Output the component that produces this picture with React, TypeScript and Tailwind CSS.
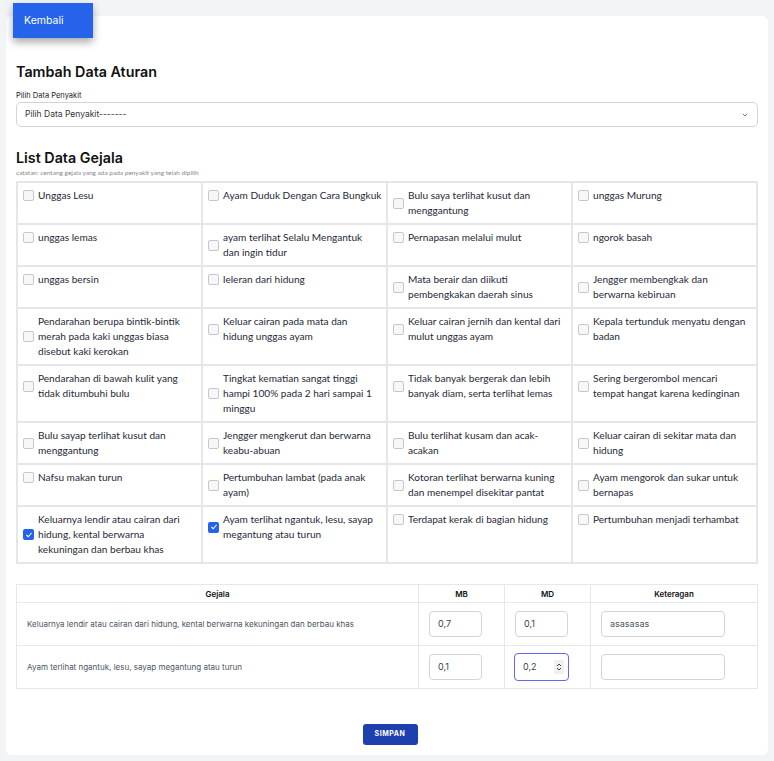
import React, {useState} from 'react';

interface Gejala {
    id: number;
    nama: string;
}

// line breaks follow the original page's wrapping
const gejalaList: Gejala[] = [
    {id: 1, nama: 'Unggas Lesu'},
    {id: 2, nama: 'Ayam Duduk Dengan Cara Bungkuk'},
    {id: 3, nama: 'Bulu saya terlihat kusut dan\nmenggantung'},
    {id: 4, nama: 'unggas Murung'},
    {id: 5, nama: 'unggas lemas'},
    {id: 6, nama: 'ayam terlihat Selalu Mengantuk\ndan ingin tidur'},
    {id: 7, nama: 'Pernapasan melalui mulut'},
    {id: 8, nama: 'ngorok basah'},
    {id: 9, nama: 'unggas bersin'},
    {id: 10, nama: 'leleran dari hidung'},
    {id: 11, nama: 'Mata berair dan diikuti\npembengkakan daerah sinus'},
    {id: 12, nama: 'Jengger membengkak dan\nberwarna kebiruan'},
    {id: 13, nama: 'Pendarahan berupa bintik-bintik\nmerah pada kaki unggas biasa\ndisebut kaki kerokan'},
    {id: 14, nama: 'Keluar cairan pada mata dan\nhidung unggas ayam'},
    {id: 15, nama: 'Keluar cairan jernih dan kental dari\nmulut unggas ayam'},
    {id: 16, nama: 'Kepala tertunduk menyatu dengan\nbadan'},
    {id: 17, nama: 'Pendarahan di bawah kulit yang\ntidak ditumbuhi bulu'},
    {id: 18, nama: 'Tingkat kematian sangat tinggi\nhampi 100% pada 2 hari sampai 1\nminggu'},
    {id: 19, nama: 'Tidak banyak bergerak dan lebih\nbanyak diam, serta terlihat lemas'},
    {id: 20, nama: 'Sering bergerombol mencari\ntempat hangat karena kedinginan'},
    {id: 21, nama: 'Bulu sayap terlihat kusut dan\nmenggantung'},
    {id: 22, nama: 'Jengger mengkerut dan berwarna\nkeabu-abuan'},
    {id: 23, nama: 'Bulu terlihat kusam dan acak-\nacakan'},
    {id: 24, nama: 'Keluar cairan di sekitar mata dan\nhidung'},
    {id: 25, nama: 'Nafsu makan turun'},
    {id: 26, nama: 'Pertumbuhan lambat (pada anak\nayam)'},
    {id: 27, nama: 'Kotoran terlihat berwarna kuning\ndan menempel disekitar pantat'},
    {id: 28, nama: 'Ayam mengorok dan sukar untuk\nbernapas'},
    {id: 29, nama: 'Keluarnya lendir atau cairan dari\nhidung, kental berwarna\nkekuningan dan berbau khas'},
    {id: 30, nama: 'Ayam terlihat ngantuk, lesu, sayap\nmegantung atau turun'},
    {id: 31, nama: 'Terdapat kerak di bagian hidung'},
    {id: 32, nama: 'Pertumbuhan menjadi terhambat'},
];

function Checkbox({checked}: {checked: boolean}) {
    if (checked) {
        return (
            <span className="shrink-0 w-[11px] h-[11px] rounded-[2px] bg-[#2563eb] flex items-center justify-center">
                <svg width="8" height="8" viewBox="0 0 16 16" fill="none">
                    <path d="M3.5 8.5l3 3 6-7" stroke="white" strokeWidth="2.2" strokeLinecap="round" strokeLinejoin="round"/>
                </svg>
            </span>
        );
    }
    return <span className="shrink-0 w-[11px] h-[11px] rounded-[2px] border border-[#c4c7cc] bg-[#f7f7f8]"></span>;
}

function App() {
    const [selected, setSelected] = useState<number[]>([29, 30]);

    function toggle(id: number) {
        setSelected(selected.includes(id) ? selected.filter(s => s !== id) : [...selected, id]);
    }

    const rows = [
        {gejala: 'Keluarnya lendir atau cairan dari hidung, kental berwarna kekuningan dan berbau khas', mb: '0,7', md: '0,1', ket: 'asasasas'},
        {gejala: 'Ayam terlihat ngantuk, lesu, sayap megantung atau turun', mb: '0,1', md: '0,2', ket: ''},
    ];

    return (
        <div className="min-h-[761px] bg-[#f3f4f6] pt-[3px] pb-[6px] font-['Inter',sans-serif]">
            <button className="relative z-10 ml-[13px] w-[80px] h-[35px] bg-[#2563eb] text-white text-[10.5px] text-left pl-[11px] shadow-[0_4px_8px_rgba(0,0,0,0.35)]">
                Kembali
            </button>
            <div className="mx-[6px] -mt-[22px] bg-white rounded-[6px] px-[10px] pt-[46px] pb-[10px]">
                <h1 className="text-[14.3px] font-semibold text-[#111] leading-[20px]">Tambah Data Aturan</h1>
                <p className="mt-[9px] text-[7.5px] text-[#222] leading-[10px]">Pilih Data Penyakit</p>
                <div className="mt-[1px] h-[25px] border border-[#d1d5db] rounded-[5px] flex items-center justify-between px-[8px]">
                    <span className="text-[8.5px] text-[#333]">Pilih Data Penyakit-------</span>
                    <svg width="8" height="8" viewBox="0 0 16 16" fill="none">
                        <path d="M4 6l4 4 4-4" stroke="#555" strokeWidth="1.6" strokeLinecap="round" strokeLinejoin="round"/>
                    </svg>
                </div>

                <h2 className="mt-[21px] text-[14.3px] font-semibold text-[#111] leading-[20px]">List Data Gejala</h2>
                <p className="text-[6.5px] text-[#888] leading-[9px] font-['Lato',sans-serif]">catatan: centang gejala yang ada pada penyakit yang telah dipilih</p>

                <div className="mt-[4px] grid grid-cols-4 gap-[2px] bg-[#e5e6ea] p-[2px] font-['Lato',sans-serif]">
                    {gejalaList.map((g) => (
                        <label key={g.id} onClick={() => toggle(g.id)} className="bg-white px-[5px] py-[5px] flex items-start cursor-pointer">
                            <div className="flex items-center gap-[4px]">
                                <Checkbox checked={selected.includes(g.id)}/>
                                <span className="text-[10.1px] leading-[15px] text-[#1f2937] whitespace-pre">{g.nama}</span>
                            </div>
                        </label>
                    ))}
                </div>

                <table className="mt-[20px] w-full border-collapse text-[8px]">
                    <thead>
                    <tr>
                        <th className="border border-[#e5e7eb] h-[18px] font-semibold text-[#111]">Gejala</th>
                        <th className="border border-[#e5e7eb] w-[86px] font-semibold text-[#111]">MB</th>
                        <th className="border border-[#e5e7eb] w-[86px] font-semibold text-[#111]">MD</th>
                        <th className="border border-[#e5e7eb] w-[167px] font-semibold text-[#111]">Keteragan</th>
                    </tr>
                    </thead>
                    <tbody>
                    {rows.map((r, index) => (
                        <tr key={index} className="h-[43px]">
                            <td className="border border-[#e5e7eb] px-[10px] text-[#4b5563]">{r.gejala}</td>
                            <td className="border border-[#e5e7eb] px-[10px]">
                                <div className="w-[53px] h-[26px] border border-[#d1d5db] rounded-[4px] flex items-center px-[8px] text-[9px] text-[#374151]">{r.mb}</div>
                            </td>
                            <td className="border border-[#e5e7eb] px-[10px]">
                                {index === 1 ? (
                                    <div className="w-[55px] h-[28px] -ml-[1px] border-[1.5px] border-[#6366f1] rounded-[4px] flex items-center justify-between pl-[8px] pr-[4px] text-[9px] text-[#374151]">
                                        <span>{r.md}</span>
                                        <span className="w-[10px] h-[14px] bg-[#f0f0f0] flex items-center justify-center">
                                            <svg width="6" height="8" viewBox="0 0 6 8">
                                                <path d="M1 3l2-2 2 2M1 5l2 2 2-2" stroke="#444" strokeWidth="1" fill="none"/>
                                            </svg>
                                        </span>
                                    </div>
                                ) : (
                                    <div className="w-[53px] h-[26px] border border-[#d1d5db] rounded-[4px] flex items-center px-[8px] text-[9px] text-[#374151]">{r.md}</div>
                                )}
                            </td>
                            <td className="border border-[#e5e7eb] px-[10px]">
                                <div className="w-[124px] h-[26px] border border-[#d1d5db] rounded-[4px] flex items-center px-[8px] text-[9px] text-[#4b5563]">{r.ket}</div>
                            </td>
                        </tr>
                    ))}
                    </tbody>
                </table>

                <div className="flex justify-center mt-[35px] pl-[6px]">
                    <button className="w-[55px] h-[21px] bg-[#1e40af] rounded-[3px] text-white text-[7px] font-bold tracking-[0.08em]">
                        SIMPAN
                    </button>
                </div>
            </div>
        </div>
    );
}

export default App;
